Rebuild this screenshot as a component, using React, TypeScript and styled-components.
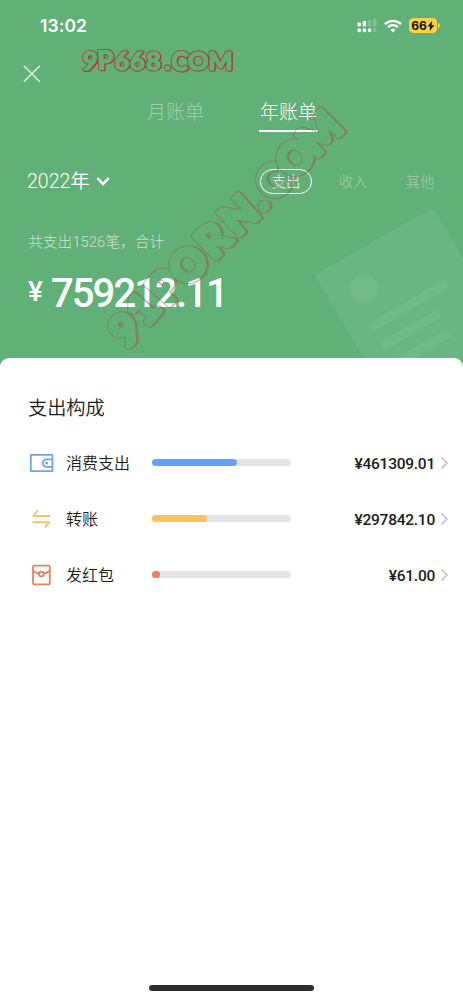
import React from 'react';
import styled, { createGlobalStyle } from 'styled-components';

const Global = createGlobalStyle`
  * { box-sizing: border-box; }
  body { margin: 0; background: #fff; }
`;

const cjk = `"Noto Sans CJK SC", sans-serif`;

const Screen = styled.div`
  position: relative;
  width: 463px;
  height: 1000px;
  overflow: hidden;
  display: flex;
  flex-direction: column;
  background: #61b077;
  color: #fff;
  font-family: ${cjk};
`;

const StatusBar = styled.div`
  display: flex;
  align-items: center;
  justify-content: space-between;
  height: 51px;
  padding: 0 23.5px 0 40px;
`;

const Clock = styled.span`
  font: 600 17.5px/20px Inter, sans-serif;
  letter-spacing: 0.1px;
`;

const StatusIcons = styled.div`
  display: flex;
  align-items: center;
  gap: 7px;
`;

const Battery = styled.div`
  display: flex;
  align-items: center;
  gap: 1px;
`;

const BatteryBody = styled.div`
  display: flex;
  align-items: center;
  justify-content: center;
  width: 28px;
  height: 15px;
  border-radius: 4.5px;
  background: #fbd341;
  color: #111;
  font: 700 12px/15px Inter, sans-serif;
`;

const BatteryTip = styled.div`
  width: 1.5px;
  height: 5px;
  border-radius: 0 2px 2px 0;
  background: #fbd341;
`;

const NavBar = styled.div`
  display: flex;
  align-items: center;
  height: 45px;
  padding-left: 23px;
`;

const Tabs = styled.div`
  display: flex;
  gap: 54px;
  height: 36px;
  padding-left: 146px;
`;

const Tab = styled.div<{ $active?: boolean }>`
  width: 59px;
  height: 35.5px;
  text-align: center;
  font-size: 19px;
  font-weight: 300;
  line-height: 30px;
  color: ${p => (p.$active ? '#fff' : 'rgba(255,255,255,.43)')};
  border-bottom: 2px solid ${p => (p.$active ? '#fff' : 'transparent')};
`;

const FilterRow = styled.div`
  display: flex;
  align-items: center;
  justify-content: space-between;
  height: 98px;
  padding: 0 17px 0 27px;
`;

const Year = styled.div`
  display: flex;
  align-items: center;
  gap: 6px;
  padding-top: 1px;
  font-family: Roboto, ${cjk};
  font-size: 19.5px;
  font-weight: 350;
  line-height: 28px;
`;

const Filters = styled.div`
  display: flex;
  gap: 15px;
`;

const Pill = styled.div<{ $active?: boolean }>`
  width: 52px;
  height: 25px;
  border: 1.4px solid ${p => (p.$active ? '#fff' : 'transparent')};
  border-radius: 13px;
  text-align: center;
  font-size: 14.3px;
  font-weight: 300;
  line-height: 22px;
  color: ${p => (p.$active ? '#fff' : 'rgba(255,255,255,.4)')};
`;

const Summary = styled.div`
  height: 128px;
  padding: 2px 28px 0;
`;

const Count = styled.div`
  font-family: Roboto, ${cjk};
  font-size: 14.8px;
  font-weight: 300;
  line-height: 20px;
  color: rgba(255, 255, 255, 0.68);
`;

const Total = styled.div`
  display: flex;
  align-items: flex-start;
  gap: 8px;
  margin-top: 21px;
`;

const Currency = styled.span`
  font: 500 28px/38px Roboto, sans-serif;
`;

const TotalValue = styled.span`
  font: 500 40px/42px Roboto, sans-serif;
  letter-spacing: -1.9px;
`;

const Panel = styled.main`
  position: relative;
  flex: 1;
  padding: 35px 14px 0 28px;
  border-radius: 9px 9px 0 0;
  background: #fff;
  color: #1c1c1c;
`;

const Title = styled.h2`
  margin: 0 0 13px;
  font-size: 19.2px;
  font-weight: 350;
  line-height: 29px;
`;

const Row = styled.div`
  display: flex;
  align-items: center;
  height: 56px;
`;

const Label = styled.div`
  width: 97px;
  padding: 0 0 3px 11px;
  font-size: 16px;
  font-weight: 350;
  line-height: 24px;
`;

const Track = styled.div`
  width: 139px;
  height: 7px;
  margin-bottom: 1px;
  border-radius: 4px;
  background: #e4e4e4;
`;

const Fill = styled.div<{ $color: string }>`
  height: 7px;
  border-radius: 4px;
  background: ${p => p.$color};
`;

const Amount = styled.div`
  flex: 1;
  text-align: right;
  font: 500 15.5px/24px Roboto, sans-serif;
  letter-spacing: -0.25px;
  padding: 1px 5px 0 0;
`;

const HomeIndicator = styled.div`
  position: absolute;
  bottom: 9px;
  left: 149px;
  width: 165px;
  height: 6px;
  border-radius: 3px;
  background: #2d2d2d;
`;

const Receipt = styled.svg`
  position: absolute;
  left: 300px;
  top: 200px;
`;

const WatermarkLayer = styled.svg`
  position: absolute;
  left: 0;
  top: 0;
  overflow: visible;
  pointer-events: none;
`;

const Signal = () => (
  <svg width="20" height="15" viewBox="0 0 20 15" fill="#fff">
    <rect x="0.5" y="4.5" width="3.4" height="4" rx="1.2" />
    <rect x="5.7" y="3" width="3.4" height="5.5" rx="1.2" />
    <rect x="10.9" y="1.8" width="3.4" height="6.7" rx="1.2" opacity=".22" />
    <rect x="16.1" y="0.3" width="3.4" height="8.2" rx="1.2" opacity=".22" />
    <rect x="0.5" y="10.2" width="3.4" height="4" rx="1.5" />
    <rect x="5.7" y="10.2" width="3.4" height="4" rx="1.5" />
    <rect x="10.9" y="10.2" width="3.4" height="4" rx="1.5" />
    <rect x="16.1" y="10.2" width="3.4" height="4" rx="1.5" opacity=".22" />
  </svg>
);

const Wifi = () => (
  <svg width="18" height="14" viewBox="0 0 18 14" fill="none" stroke="#fff" strokeWidth="2.3">
    <path d="M1 5.1C5.6.8 12.4.8 17 5.1" />
    <path d="M4 8.2c2.9-2.6 7.1-2.6 10 0" />
    <path d="M6.5 10.7c1.4-1.3 3.6-1.3 5 0L9 13.4z" fill="#fff" stroke="none" />
  </svg>
);

const WalletIcon = () => (
  <svg width="27" height="26" viewBox="0 0 27 26" fill="none" stroke="#6ca3f8" strokeWidth="1.8">
    <rect x="2.8" y="4.8" width="21.6" height="16.4" rx=".5" />
    <path d="M24.4 9.3h-5.8a3.8 3.8 0 0 0 0 7.6h5.8" />
    <circle cx="18.6" cy="13.1" r="1.5" fill="#6ca3f8" stroke="none" />
  </svg>
);

const TransferIcon = () => (
  <svg width="27" height="26" viewBox="0 0 27 26" fill="none" stroke="#f7c363" strokeWidth="1.8" strokeLinecap="round" strokeLinejoin="round">
    <path d="M21.5 10H5.2l4.3-5.2" />
    <path d="M5.2 16.2h16.3l-4.2 4.7" />
  </svg>
);

const PacketIcon = () => (
  <svg width="27" height="26" viewBox="0 0 27 26" fill="none" stroke="#ec8060" strokeWidth="1.8">
    <rect x="5" y="3.6" width="16.8" height="18.8" rx=".8" />
    <path d="M5 8.8c2.1 1.7 4.1 2.4 6 2.7M21.8 8.8c-2.1 1.7-4.1 2.4-6 2.7" />
    <circle cx="13.4" cy="12" r="2.4" />
  </svg>
);

interface OutlineProps {
  id: string;
  text: string;
  x: string;
  rotate: string;
  size: number;
  color: string;
  bold: number;
  line: number;
  shadow: number;
}

/* Rounded hollow lettering: a fattened word with its own body masked out. */
const OutlineWord = ({ id, text, x, rotate, size, color, bold, line, shadow }: OutlineProps) => {
  const word = { x, rotate, fontSize: size, textAnchor: 'middle' as const };
  return (
    <>
      <mask id={id} maskUnits="userSpaceOnUse" x="-20" y="-80" width="400" height="120">
        <rect x="-20" y="-80" width="400" height="120" fill="#fff" />
        <text {...word} fill="#000" stroke="#000" strokeWidth={bold}>{text}</text>
      </mask>
      <g mask={`url(#${id})`}>
        <text {...word} fill={color} stroke={color} strokeWidth={bold + line * 2}>{text}</text>
        <text {...word} fill={color} stroke={color} strokeWidth={bold + line} transform={`translate(${shadow} ${shadow})`}>{text}</text>
      </g>
    </>
  );
};

const rows = [
  { icon: <WalletIcon />, label: '消费支出', share: 84.5, color: '#66a0fa', amount: '461309.01' },
  { icon: <TransferIcon />, label: '转账', share: 54.5, color: '#f6c35e', amount: '297842.10' },
  { icon: <PacketIcon />, label: '发红包', share: 8, color: '#ee7f5f', amount: '61.00' },
];

export default function App() {
  return (
    <Screen>
      <Global />
      <Receipt width="163" height="170" viewBox="300 200 163 170">
        <path d="M317.5 273.5 429 209.7q4-2 6.5 2L533 380 386 396 316.5 278q-1.5-3 1-4.5z" fill="#69b682" />
        <circle cx="364" cy="289" r="14.2" fill="#72bb88" />
        <g stroke="#72bb88" strokeWidth="9" strokeLinecap="round">
          <path d="M374 325.5 444 285M385 344.5 435.5 315.5M390 367 446.5 334.5" />
        </g>
      </Receipt>
      <StatusBar>
        <Clock>13:02</Clock>
        <StatusIcons>
          <Signal />
          <Wifi />
          <Battery>
            <BatteryBody>
              66
              <svg width="8" height="10" viewBox="0 0 8 10" fill="#111">
                <path d="M5 0 .5 5.5h2.7L2.5 10l5-5.700H4.600z" />
              </svg>
            </BatteryBody>
            <BatteryTip />
          </Battery>
        </StatusIcons>
      </StatusBar>
      <NavBar>
        <svg width="18" height="18" viewBox="0 0 18 18" stroke="#fff" strokeOpacity=".8" strokeWidth="1.5" strokeLinecap="round">
          <path d="M1.3 1.3l15 15M16.3 1.3l-15 15" />
        </svg>
      </NavBar>
      <Tabs>
        <Tab>月账单</Tab>
        <Tab $active>年账单</Tab>
      </Tabs>
      <FilterRow>
        <Year>
          2022年
          <svg width="14" height="9" viewBox="0 0 14 9" fill="none" stroke="#fff" strokeWidth="2.5">
            <path d="M1.3 1.2 7 6.9l5.7-5.7" />
          </svg>
        </Year>
        <Filters>
          <Pill $active>支出</Pill>
          <Pill>收入</Pill>
          <Pill>其他</Pill>
        </Filters>
      </FilterRow>
      <Summary>
        <Count>共支出1526笔，合计</Count>
        <Total>
          <Currency>¥</Currency>
          <TotalValue>759212.11</TotalValue>
        </Total>
      </Summary>
      <Panel>
        <Title>支出构成</Title>
        {rows.map(r => (
          <Row key={r.label}>
            {r.icon}
            <Label>{r.label}</Label>
            <Track>
              <Fill $color={r.color} style={{ width: r.share }} />
            </Track>
            <Amount>¥{r.amount}</Amount>
            <svg width="9" height="14" viewBox="0 0 9 14" fill="none" stroke="#ccc" strokeWidth="2">
              <path d="M1.5 1.5 7 7l-5.5 5.5" />
            </svg>
          </Row>
        ))}
      </Panel>
      <HomeIndicator />
      <WatermarkLayer width="463" height="500" viewBox="0 0 463 500" strokeLinejoin="round" fontFamily="Lato, sans-serif" fontWeight="900">
        <g transform="translate(81.5 69.5)">
          <OutlineWord id="top-word" text="9P668.COM" x="7.5 24.5 40.5 56 72 86 97.5 116.5 139" rotate="6 -4 0 0 0 0 5 0 0" size={25.5} color="#b52f43" bold={1.6} line={0.75} shadow={0.8} />
        </g>
        <g transform="translate(124 350.5) rotate(-45)" opacity=".42">
          <OutlineWord id="diagonal-word" text="91PORN.COM" x="14 44 75 106 141 176 201 223 257 292" rotate="6 -4 -4 0 0 3 0 4 0 0" size={43} color="#a04840" bold={4.5} line={1} shadow={1.5} />
        </g>
      </WatermarkLayer>
    </Screen>
  );
}
